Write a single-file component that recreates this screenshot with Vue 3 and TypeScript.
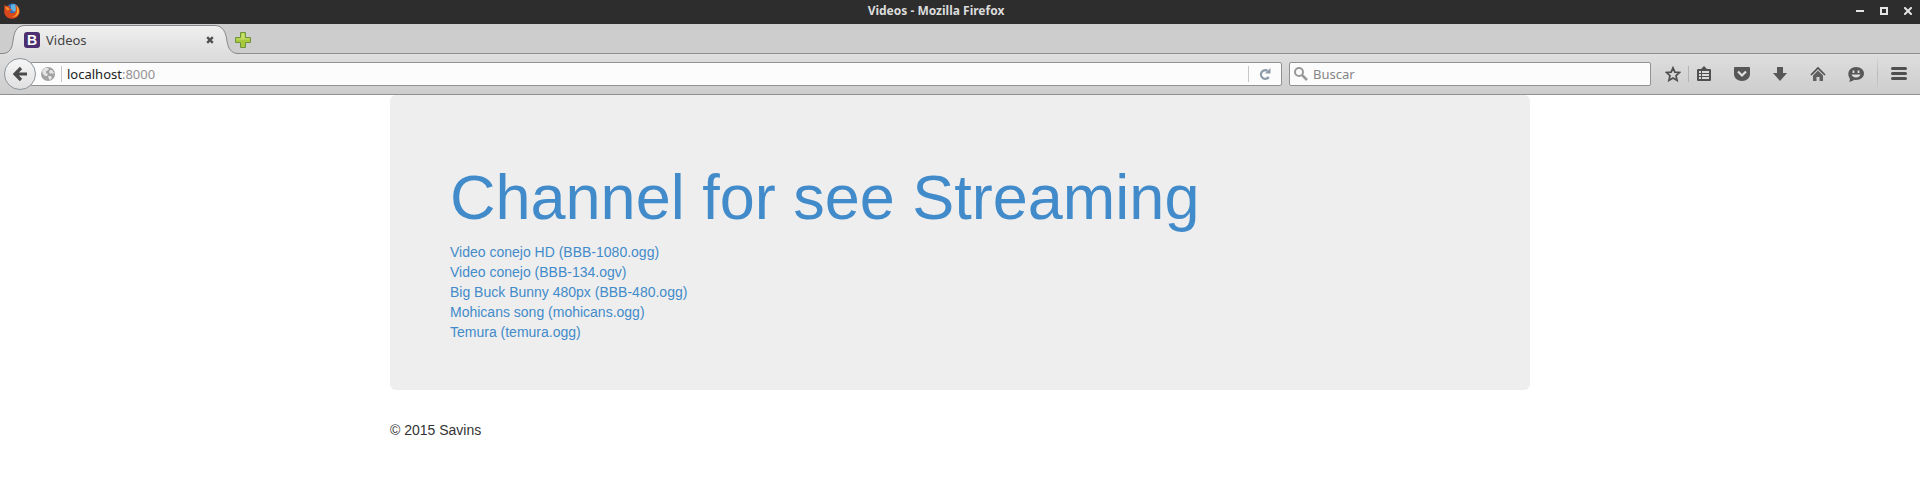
<script setup lang="ts">
interface Video {
  title: string
  file: string
}

const videos: Video[] = [
  { title: 'Video conejo HD', file: 'BBB-1080.ogg' },
  { title: 'Video conejo', file: 'BBB-134.ogv' },
  { title: 'Big Buck Bunny 480px', file: 'BBB-480.ogg' },
  { title: 'Mohicans song', file: 'mohicans.ogg' },
  { title: 'Temura', file: 'temura.ogg' },
]
</script>

<template>
  <div class="window">
    <header class="titlebar">
      <svg class="fox" width="16" height="16" viewBox="0 0 16 16" aria-hidden="true">
        <circle cx="8.500" cy="7" r="6.500" fill="#2f6fb5" />
        <path d="M7 2c3-2 7 0 7 4l-3 3-4-2z" fill="#5fb4e6" />
        <path d="M.5 1.500C1.500 3 2 3 3.500 3L6 3 5.500 5 8 6.500 6.500 8 5.500 9c2 2 5 1.500 6-1 .8-2 .4-4-.6-6C14 3 15.500 5 15.700 7.500 16 12 13 15.500 8.500 15.700 3.500 16 .3 12.500.2 8.500Z" fill="#d9481c" />
        <path d="M12.500 2.500c2 2 3 4.500 2.200 7.500-1 3-4 4.500-7 4 3-.5 5-2.500 5.300-5.500.2-2-.1-4-.5-6Z" fill="#f9a72b" />
        <path d="M1 4c1 0 2 0 3 .5L6 6.500 3 7.500Z" fill="#f58a2c" />
      </svg>
      <div class="window-title">Videos - Mozilla Firefox</div>
      <div class="window-buttons">
        <button type="button" aria-label="Minimize"><svg width="8" height="8" viewBox="0 0 8 8"><path d="M0 3h8v2H0z" fill="#e4e4e4" /></svg></button>
        <button type="button" aria-label="Maximize"><svg width="8" height="8" viewBox="0 0 8 8"><path d="M1 1h6v6H1z" fill="none" stroke="#e4e4e4" stroke-width="2" /></svg></button>
        <button type="button" aria-label="Close"><svg width="8" height="8" viewBox="0 0 8 8"><path d="M1 1l6 6M7 1L1 7" stroke="#e4e4e4" stroke-width="2" stroke-linecap="square" /></svg></button>
      </div>
    </header>

    <div class="tabstrip">
      <div class="tab">
        <svg class="tab-shape" width="240" height="30" viewBox="0 0 240 30" aria-hidden="true">
          <defs>
            <linearGradient id="tab-fill" x1="0" y1="0" x2="0" y2="1">
              <stop offset="0" stop-color="#f0f0f0" />
              <stop offset="1" stop-color="#dedede" />
            </linearGradient>
          </defs>
          <path d="M0 30V29.500H2C10 29.500 12 24 13 17C14 9 16 1.500 25 1.500H215C223 1.500 226 9 227 17C228 24 231 29.500 238 29.500H240V30Z" fill="url(#tab-fill)" />
          <path d="M0 29.500H2C10 29.500 12 24 13 17C14 9 16 1.500 25 1.500H215C223 1.500 226 9 227 17C228 24 231 29.500 238 29.500H240" fill="none" stroke="#84888c" />
        </svg>
        <span class="favicon">B</span>
        <span class="tab-label">Videos</span>
        <button class="tab-close" type="button" aria-label="Close tab">
          <svg width="8" height="8" viewBox="0 0 8 8"><path d="M1.200 1.200l5.600 5.600M6.800 1.200L1.200 6.800" stroke="#505050" stroke-width="2.400" /></svg>
        </button>
      </div>
      <button class="new-tab" type="button" aria-label="New tab">
        <svg width="16" height="16" viewBox="0 0 16 16">
          <path d="M5.500.5h5v5h5v5h-5v5h-5v-5h-5v-5h5z" fill="#a9c93c" stroke="#6f9440" />
          <path d="M6.500 1.500h3v5h5v1h-13v-1h5z" fill="#c8e06c" />
        </svg>
      </button>
    </div>

    <nav class="toolbar" aria-label="Navigation">
      <button class="back" type="button" aria-label="Back">
        <svg width="16" height="16" viewBox="0 0 16 16"><path d="M9 2L3 8l6 6M3.500 8H15" fill="none" stroke="#4a4a4a" stroke-width="3.200" /></svg>
      </button>
      <div class="urlbar">
        <svg class="globe" width="14" height="14" viewBox="0 0 14 14" aria-hidden="true">
          <circle cx="7" cy="7" r="7" fill="#a2a2a2" />
          <path d="M1 4l3-3 3 0 1 1-2 2-1 0 0 2 2 1-1 2-2 0-2-2zM9 3l2 0 2 3-1 1-2-1-1 1-1-2zM7 9l3 0 1 2-2 2-1-1z" fill="#e4e4e4" />
        </svg>
        <span class="separator"></span>
        <a class="address" href="#">localhost<span>:8000</span></a>
        <span class="separator"></span>
        <button class="reload" type="button" aria-label="Reload">
          <svg width="12" height="12" viewBox="0 0 12 12"><path d="M8.500 2.800A4.300 4.300 0 1 0 9.800 9" fill="none" stroke="#8b99a8" stroke-width="2.200" /><path d="M11.500 0v5.500H6z" fill="#8b99a8" /></svg>
        </button>
      </div>
      <label class="search">
        <svg width="14" height="14" viewBox="0 0 14 14" aria-hidden="true"><circle cx="5" cy="5" r="4" fill="none" stroke="#999" stroke-width="2" /><path d="M8 8l5 5" stroke="#999" stroke-width="2.500" /></svg>
        <input type="text" placeholder="Buscar" aria-label="Buscar" />
      </label>
      <div class="tools">
        <button class="star" type="button" aria-label="Bookmark"><svg width="16" height="16" viewBox="0 0 16 16"><path d="M8 1.800l1.900 4.300 4.600.4-3.500 3.200 1.100 4.700L8 12l-4.100 2.400 1.100-4.700L1.500 6.500l4.600-.4z" fill="none" stroke="#4f4f4f" stroke-width="1.700" /></svg></button>
        <span class="separator"></span>
        <button class="library" type="button" aria-label="Library"><svg width="16" height="16" viewBox="0 0 16 16"><path d="M2 3h3l3-3 3 3h3q1 0 1 1v10q0 1-1 1H2q-1 0-1-1V4q0-1 1-1z" fill="#505050" /><path d="M3 5h2v2H3zM6 5h7v2H6zM3 8h2v2H3zM6 8h7v2H6zM3 11h2v2H3zM6 11h7v2H6z" fill="#d8d8d8" /></svg></button>
        <button type="button" aria-label="Pocket"><svg width="16" height="16" viewBox="0 0 16 16"><path d="M1 1h14q1 0 1 1v6c0 4-3.500 7-8 7s-8-3-8-7V2q0-1 1-1z" fill="#575757" /><path d="M4 5.500l4 4 4-4" fill="none" stroke="#e2e2e2" stroke-width="2.200" /></svg></button>
        <button type="button" aria-label="Downloads"><svg width="16" height="16" viewBox="0 0 16 16"><path d="M5 1h6v6h4l-7 8-7-8h4z" fill="#575757" /></svg></button>
        <button type="button" aria-label="Home"><svg width="16" height="16" viewBox="0 0 16 16"><path d="M1 9l7-7 7 7" fill="none" stroke="#4f4f4f" stroke-width="1.700" /><path d="M3 9.500l5-5 5 5V15H9.500v-4h-3v4H3z" fill="#606060" /></svg></button>
        <button type="button" aria-label="Chat"><svg width="16" height="16" viewBox="0 0 16 16"><path d="M8 1c5 0 8 3 8 6.500S13 14 8 14q-1 0-2-.3c-1 1.300-3 2-5 1.800 1-1 1-2 .8-3C-2 7 2 1 8 1z" fill="#575757" /><path d="M5.500 4.500v2.500M10.500 4.500v2.500" stroke="#ddd" stroke-width="1.800" /><path d="M3.500 8.500h9c-1 4-8 4-9 0z" fill="#ddd" /></svg></button>
        <span class="separator tall"></span>
        <button type="button" aria-label="Menu"><svg width="16" height="16" viewBox="0 0 16 16"><path d="M1.500 2.500h13M1.500 7.500h13M1.500 12.500h13" stroke="#505050" stroke-width="3" stroke-linecap="round" /></svg></button>
      </div>
    </nav>

    <main class="container">
      <section class="jumbotron">
        <h1><a href="#">Channel for see Streaming</a></h1>
        <ul>
          <li v-for="video in videos" :key="video.file">
            <a :href="'#' + video.file">{{ video.title }} ({{ video.file }})</a>
          </li>
        </ul>
      </section>
      <footer>© 2015 Savins</footer>
    </main>
  </div>
</template>

<style>
body {
  margin: 0;
  background: #fff;
}
</style>

<style scoped>
* {
  box-sizing: border-box;
}
.window {
  font-family: "Noto Sans", "Open Sans", sans-serif;
  font-size: 13px;
}
svg {
  display: block;
  flex: none;
}
button {
  display: flex;
  align-items: center;
  justify-content: center;
  flex: none;
  margin: 0;
  padding: 0;
  border: 0;
  background: none;
}
.titlebar {
  display: grid;
  grid-template-columns: 80px 1fr 80px;
  align-items: center;
  height: 24px;
  padding: 0 8px 2px 4px;
  background: #2d2d2d;
}
.window-title {
  padding-right: 44px;
  color: #dcdcdc;
  font-size: 12px;
  font-weight: 700;
  line-height: 20px;
  text-align: center;
}
.window-buttons {
  display: flex;
  justify-content: flex-end;
  gap: 16px;
}
.tabstrip {
  display: flex;
  align-items: center;
  height: 30px;
  background: #cdcdcd;
  box-shadow: inset 0 -1px #909090;
}
.tab {
  position: relative;
  display: flex;
  align-items: center;
  width: 240px;
  height: 30px;
  padding: 2px 26px 0 24px;
}
.tab-shape {
  position: absolute;
  inset: 0;
}
.favicon {
  position: relative;
  width: 16px;
  height: 16px;
  border-radius: 3px;
  background: #4b2f70;
  color: #fff;
  font: 700 14px/16px "Liberation Sans", Arial, sans-serif;
  text-align: center;
}
.tab-label {
  position: relative;
  flex: 1;
  margin-left: 6px;
  color: #444;
  line-height: 18px;
}
.tab-close {
  position: relative;
}
.new-tab {
  margin: 2px 0 0 -5px;
}
.toolbar {
  display: flex;
  align-items: center;
  height: 41px;
  padding: 0 2px 0 4px;
  border-bottom: 1px solid #909090;
  background: linear-gradient(#dedede, #cdcdcd);
}
.back {
  z-index: 1;
  width: 32px;
  height: 32px;
  border: 1px solid #8d949b;
  border-radius: 50%;
  background: linear-gradient(#f6f6f6, #e0e0e0);
}
.urlbar {
  display: flex;
  align-items: center;
  flex: 1;
  height: 24px;
  margin-left: -6px;
  padding-left: 10px;
  border: 1px solid #919191;
  border-radius: 2px;
  background: #fcfcfc;
}
.separator {
  width: 1px;
  height: 16px;
  background: #c8c8c8;
}
.urlbar .globe {
  margin-right: 6px;
}
.address {
  flex: 1;
  margin-left: 5px;
  color: #222;
  line-height: 18px;
  text-decoration: none;
}
.address span {
  color: #929292;
}
.reload {
  width: 32px;
  height: 22px;
}
.search {
  display: flex;
  align-items: center;
  width: 362px;
  height: 24px;
  margin-left: 7px;
  padding-left: 4px;
  border: 1px solid #919191;
  border-radius: 2px;
  background: #fcfcfc;
}
.search input {
  flex: 1;
  min-width: 0;
  margin: 0;
  padding: 0 5px;
  border: 0;
  outline: 0;
  background: none;
  font: inherit;
  line-height: 18px;
}
.search input::placeholder {
  color: #858585;
  opacity: 1;
}
.tools {
  display: flex;
  align-items: center;
  margin-left: 7px;
}
.tools button {
  width: 38px;
  height: 32px;
}
.tools .star,
.tools .library {
  width: 30px;
}
.tools .library {
  margin-right: 4px;
}
.tools .separator {
  background: #b4b4b4;
}
.tools .tall {
  height: 34px;
  margin: 0 2px;
  background: linear-gradient(#d6d6d6, #b8b8b8, #d0d0d0);
}
.container {
  max-width: 1140px;
  margin: 0 auto;
  color: #333;
  font: 14px/20px "Liberation Sans", Arial, sans-serif;
}
.jumbotron {
  margin-bottom: 30px;
  padding: 48px 60px;
  border-radius: 6px;
  background: #eee;
}
.jumbotron a {
  color: #428bca;
  text-decoration: none;
}
h1 {
  margin: 0;
  padding: 20px 0 10px;
  font-size: 63px;
  font-weight: 400;
  line-height: 69px;
}
ul {
  margin: 0;
  padding: 0;
  list-style: none;
}
</style>
